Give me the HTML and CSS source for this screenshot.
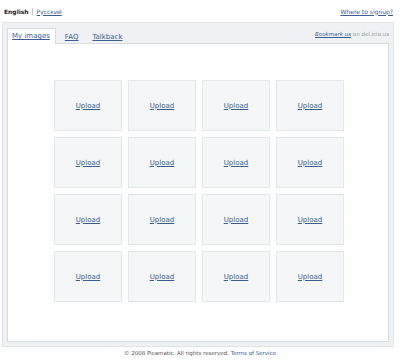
FILE: index.html
```html
<!DOCTYPE html>
<html lang="en">
<head>
    <meta charset="UTF-8">
    <title>Picamatic</title>
    <link rel="stylesheet" href="styles.css">
</head>
<body>
    <header class="top">
      <div class="lang">
        <b class="lang-current">English</b>
        <a class="lang-link" href="#">Русский</a>
      </div>
      <a class="signup" href="#">Where to signup?</a>
    </header>

    <section class="frame">
      <div class="tabs">
        <a class="tab tab-active" href="#">My images</a>
        <a class="tab" href="#">FAQ</a>
        <a class="tab" href="#">Talkback</a>
        <p class="bookmark"><a href="#">Bookmark us</a> on del.icio.us</p>
      </div>

      <div class="panel">
        <div class="grid">
          <div class="cell"><a href="#">Upload</a></div>
          <div class="cell"><a href="#">Upload</a></div>
          <div class="cell"><a href="#">Upload</a></div>
          <div class="cell"><a href="#">Upload</a></div>
          <div class="cell"><a href="#">Upload</a></div>
          <div class="cell"><a href="#">Upload</a></div>
          <div class="cell"><a href="#">Upload</a></div>
          <div class="cell"><a href="#">Upload</a></div>
          <div class="cell"><a href="#">Upload</a></div>
          <div class="cell"><a href="#">Upload</a></div>
          <div class="cell"><a href="#">Upload</a></div>
          <div class="cell"><a href="#">Upload</a></div>
          <div class="cell"><a href="#">Upload</a></div>
          <div class="cell"><a href="#">Upload</a></div>
          <div class="cell"><a href="#">Upload</a></div>
          <div class="cell"><a href="#">Upload</a></div>
        </div>
      </div>
    </section>

    <footer class="footer">
      © 2008 Picamatic. All rights reserved. <a href="#">Terms of Service</a>
    </footer>
</body>
</html>
```

FILE: styles.css
```css
body {
  margin: 0;
  font-family: "DejaVu Sans", sans-serif;
  color: #333333;
  background-color: #ffffff;
}

a {
  color: #3b5e91;
}

.top {
  display: flex;
  justify-content: space-between;
  align-items: center;
  height: 22px;
  padding: 0 7px 0 4px;
  box-sizing: border-box;
  font-size: 6px;
}

.lang-current {
  padding-right: 3px;
  border-right: 1px solid #cccccc;
  color: #222222;
}

.lang-link {
  margin-left: 2px;
}

.frame {
  margin: 0 6px 0 2px;
  padding: 0 4px 4px;
  background-color: #eff1f4;
  border: 1px solid #e1e4e8;
}

.tabs {
  display: flex;
  align-items: flex-end;
  height: 20px;
  font-size: 7px;
}

.tab {
  display: block;
  padding: 3px 4px;
  margin-right: 4px;
  margin-bottom: -1px;
  border: 1px solid transparent;
  border-bottom: none;
}

.tab-active {
  padding-right: 5px;
  padding-bottom: 4px;
  background-color: #ffffff;
  border-color: #d9dde1;
}

.bookmark {
  margin: 0 0 6px auto;
  font-size: 5.5px;
  color: #999999;
}

.bookmark a {
  font-style: italic;
}

.panel {
  height: 299px;
  box-sizing: border-box;
  padding-top: 36px;
  background-color: #ffffff;
  border: 1px solid #d9dde1;
}

.grid {
  display: grid;
  grid-template-columns: repeat(4, 68px);
  grid-auto-rows: 51px;
  gap: 6px;
  justify-content: center;
  margin-left: 2px;
}

.cell {
  display: flex;
  align-items: center;
  justify-content: center;
  background-color: #f4f6f8;
  border: 1px solid #e4e7ea;
  font-size: 7px;
}

.footer {
  padding-top: 3px;
  text-align: center;
  font-size: 5.5px;
  color: #555555;
}
```
